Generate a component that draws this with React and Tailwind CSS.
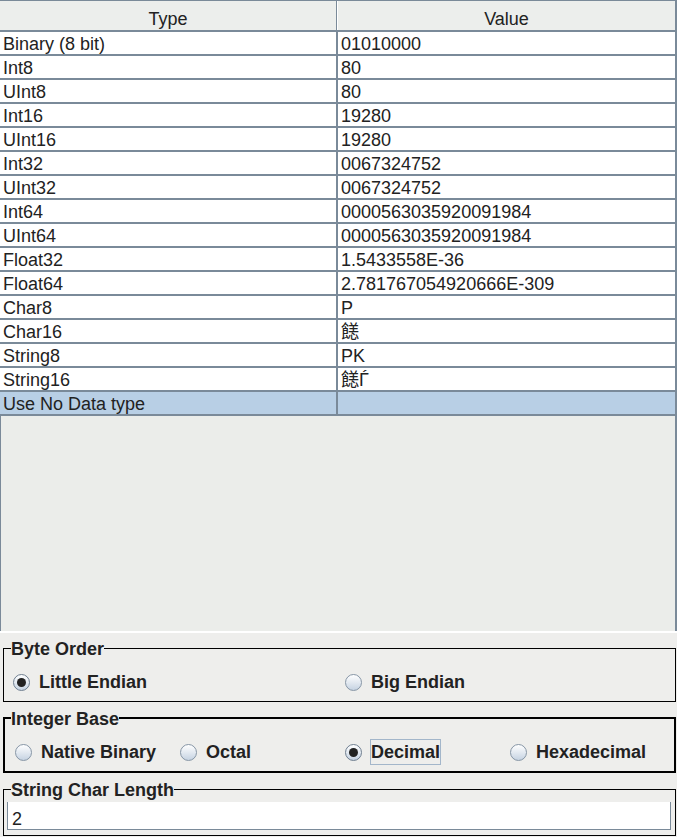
import React from "react";

const rows = [
  ["Binary (8 bit)", "01010000"],
  ["Int8", "80"],
  ["UInt8", "80"],
  ["Int16", "19280"],
  ["UInt16", "19280"],
  ["Int32", "0067324752"],
  ["UInt32", "0067324752"],
  ["Int64", "0000563035920091984"],
  ["UInt64", "0000563035920091984"],
  ["Float32", "1.5433558E-36"],
  ["Float64", "2.781767054920666E-309"],
  ["Char8", "P"],
  ["Char16", "\u4B50"],
  ["String8", "PK"],
  ["String16", "\u4B50\u0403"],
];

const Radio = ({ checked }) => (
  <span
    className={
      "w-[17px] h-[17px] shrink-0 rounded-full border bg-linear-to-b from-white to-[#c6d3e2] flex items-center justify-center " +
      (checked ? "border-[#6f7f90]" : "border-[#8796a6]")
    }
  >
    {checked && <span className="w-[9px] h-[9px] rounded-full bg-[#222]" />}
  </span>
);

const Option = ({ label, checked, focused }) => (
  <div className="flex items-center gap-[8px]">
    <Radio checked={checked} />
    <span
      className={
        "inline-block border py-[2px] leading-[20px] font-bold " +
        (focused ? "border-[#a3b6ca]" : "border-transparent")
      }
    >
      {label}
    </span>
  </div>
);

const App = () => {
  return (
    <div className="w-[677px] h-[837px] bg-[#eeeeec] text-[18px] text-[#222] font-['Liberation_Sans','Noto_Sans_CJK_SC',sans-serif] overflow-hidden">
      {/* table */}
      <div className="h-[631px] flex flex-col border-r-2 border-[#7a8a99]">
        <div className="flex border-t border-b-2 border-[#7a8a99] bg-[#eceeec]">
          <div className="w-[337px] border-r border-[#7a8a99] text-center pt-[7px] leading-[22px]">Type</div>
          <div className="flex-1 border-l border-white text-center pt-[7px] leading-[22px]">Value</div>
        </div>
        {rows.map(([type, value]) => (
          <div key={type} className="flex h-[24px] border-b-2 border-[#7a8a99] bg-white">
            <div className="w-[338px] border-r-2 border-[#7a8a99] pl-[3px] pt-[2px] leading-[20px]">{type}</div>
            <div className="flex-1 pl-[3px] pt-[2px] leading-[20px]">{value}</div>
          </div>
        ))}
        <div className="flex h-[24px] border-b-2 border-[#7a8a99] bg-[#b8cfe5]">
          <div className="w-[338px] border-r-2 border-[#7a8a99] pl-[3px] pt-[2px] leading-[20px]">Use No Data type</div>
          <div className="flex-1" />
        </div>
        <div className="flex-1 border-l border-[#7a8a99] bg-[#ebedea]" />
      </div>

      {/* options */}
      <div className="border-t-2 border-white">
        <fieldset className="mt-[5px] ml-[3px] w-[673px] border border-black">
          <legend className="ml-[7px] pt-[2px] leading-[18px] font-bold">Byte Order</legend>
          <div className="grid grid-cols-[332px_1fr] pl-[9px] pt-[11px] pb-[6px]">
            <Option label="Little Endian" checked />
            <Option label="Big Endian" />
          </div>
        </fieldset>

        <fieldset className="mt-[6px] ml-[3px] w-[673px] border-2 border-black">
          <legend className="ml-[6px] pt-[2px] leading-[18px] font-bold">Integer Base</legend>
          <div className="grid grid-cols-[165px_165px_165px_1fr] pl-[10px] pt-[11px] pb-[6px]">
            <Option label="Native Binary" />
            <Option label="Octal" />
            <Option label="Decimal" checked focused />
            <Option label="Hexadecimal" />
          </div>
        </fieldset>

        <fieldset className="mt-[6px] ml-[3px] w-[673px] border border-black">
          <legend className="ml-[7px] pt-[2px] leading-[18px] font-bold">String Char Length</legend>
          <div className="pl-[3px] pr-[4px] pt-[3px] pb-[5px]">
            <div className="h-[28px] bg-white border-l border-r border-b border-[#7a8a99] pl-[4px] pt-[7px] leading-[20px]">2</div>
          </div>
        </fieldset>
      </div>
    </div>
  );
};

export default App;
